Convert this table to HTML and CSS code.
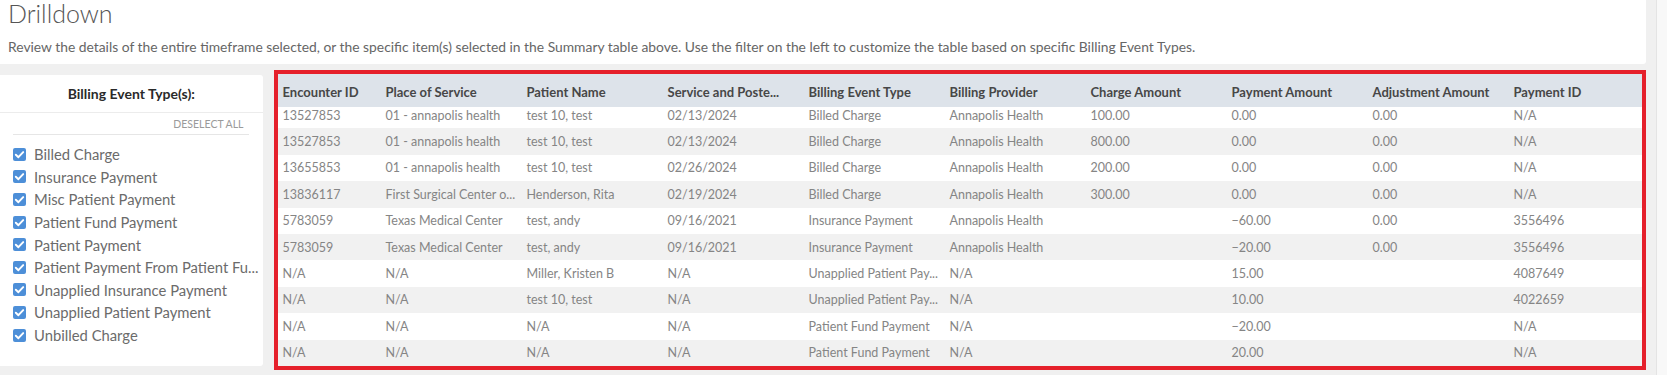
FILE: index.html
```html
<!DOCTYPE html>
<html lang="en">
<head>
<meta charset="utf-8">
<title>Drilldown</title>
<link rel="stylesheet" href="styles.css">
</head>
<body>
<div class="page">
  <main class="content">
    <section class="intro">
      <h1 class="intro-title">Drilldown</h1>
      <p class="intro-text">Review the details of the entire timeframe selected, or the specific item(s) selected in the Summary table above. Use the filter on the left to customize the table based on specific Billing Event Types.</p>
    </section>
    <div class="drill">
      <aside class="filter">
        <div class="filter-head">Billing Event Type(s):</div>
        <div class="filter-body">
          <div class="deselect">DESELECT ALL</div>
          <ul class="types">
            <li class="type"><span class="cb"><svg viewBox="0 0 12 12"><path d="M2.6 6.2 5 8.5 9.4 3.8"/></svg></span><span class="type-label">Billed Charge</span></li>
            <li class="type"><span class="cb"><svg viewBox="0 0 12 12"><path d="M2.6 6.2 5 8.5 9.4 3.8"/></svg></span><span class="type-label">Insurance Payment</span></li>
            <li class="type"><span class="cb"><svg viewBox="0 0 12 12"><path d="M2.6 6.2 5 8.5 9.4 3.8"/></svg></span><span class="type-label">Misc Patient Payment</span></li>
            <li class="type"><span class="cb"><svg viewBox="0 0 12 12"><path d="M2.6 6.2 5 8.5 9.4 3.8"/></svg></span><span class="type-label">Patient Fund Payment</span></li>
            <li class="type"><span class="cb"><svg viewBox="0 0 12 12"><path d="M2.6 6.2 5 8.5 9.4 3.8"/></svg></span><span class="type-label">Patient Payment</span></li>
            <li class="type"><span class="cb"><svg viewBox="0 0 12 12"><path d="M2.6 6.2 5 8.5 9.4 3.8"/></svg></span><span class="type-label">Patient Payment From Patient Fu...</span></li>
            <li class="type"><span class="cb"><svg viewBox="0 0 12 12"><path d="M2.6 6.2 5 8.5 9.4 3.8"/></svg></span><span class="type-label">Unapplied Insurance Payment</span></li>
            <li class="type"><span class="cb"><svg viewBox="0 0 12 12"><path d="M2.6 6.2 5 8.5 9.4 3.8"/></svg></span><span class="type-label">Unapplied Patient Payment</span></li>
            <li class="type"><span class="cb"><svg viewBox="0 0 12 12"><path d="M2.6 6.2 5 8.5 9.4 3.8"/></svg></span><span class="type-label">Unbilled Charge</span></li>
          </ul>
        </div>
      </aside>
      <div class="grid">
        <div class="grid-row grid-head">
          <div class="cell">Encounter ID</div>
          <div class="cell">Place of Service</div>
          <div class="cell">Patient Name</div>
          <div class="cell">Service and Poste...</div>
          <div class="cell">Billing Event Type</div>
          <div class="cell">Billing Provider</div>
          <div class="cell">Charge Amount</div>
          <div class="cell">Payment Amount</div>
          <div class="cell">Adjustment Amount</div>
          <div class="cell">Payment ID</div>
        </div>
        <div class="grid-body">
          <div class="grid-rows">
            <div class="grid-row"><div class="cell">13527853</div><div class="cell">01 - annapolis health</div><div class="cell">test 10, test</div><div class="cell">02/13/2024</div><div class="cell">Billed Charge</div><div class="cell">Annapolis Health</div><div class="cell">100.00</div><div class="cell">0.00</div><div class="cell">0.00</div><div class="cell">N/A</div></div>
            <div class="grid-row"><div class="cell">13527853</div><div class="cell">01 - annapolis health</div><div class="cell">test 10, test</div><div class="cell">02/13/2024</div><div class="cell">Billed Charge</div><div class="cell">Annapolis Health</div><div class="cell">800.00</div><div class="cell">0.00</div><div class="cell">0.00</div><div class="cell">N/A</div></div>
            <div class="grid-row"><div class="cell">13655853</div><div class="cell">01 - annapolis health</div><div class="cell">test 10, test</div><div class="cell">02/26/2024</div><div class="cell">Billed Charge</div><div class="cell">Annapolis Health</div><div class="cell">200.00</div><div class="cell">0.00</div><div class="cell">0.00</div><div class="cell">N/A</div></div>
            <div class="grid-row"><div class="cell">13836117</div><div class="cell">First Surgical Center o...</div><div class="cell">Henderson, Rita</div><div class="cell">02/19/2024</div><div class="cell">Billed Charge</div><div class="cell">Annapolis Health</div><div class="cell">300.00</div><div class="cell">0.00</div><div class="cell">0.00</div><div class="cell">N/A</div></div>
            <div class="grid-row"><div class="cell">5783059</div><div class="cell">Texas Medical Center</div><div class="cell">test, andy</div><div class="cell">09/16/2021</div><div class="cell">Insurance Payment</div><div class="cell">Annapolis Health</div><div class="cell"></div><div class="cell">&minus;60.00</div><div class="cell">0.00</div><div class="cell">3556496</div></div>
            <div class="grid-row"><div class="cell">5783059</div><div class="cell">Texas Medical Center</div><div class="cell">test, andy</div><div class="cell">09/16/2021</div><div class="cell">Insurance Payment</div><div class="cell">Annapolis Health</div><div class="cell"></div><div class="cell">&minus;20.00</div><div class="cell">0.00</div><div class="cell">3556496</div></div>
            <div class="grid-row"><div class="cell">N/A</div><div class="cell">N/A</div><div class="cell">Miller, Kristen B</div><div class="cell">N/A</div><div class="cell">Unapplied Patient Pay...</div><div class="cell">N/A</div><div class="cell"></div><div class="cell">15.00</div><div class="cell"></div><div class="cell">4087649</div></div>
            <div class="grid-row"><div class="cell">N/A</div><div class="cell">N/A</div><div class="cell">test 10, test</div><div class="cell">N/A</div><div class="cell">Unapplied Patient Pay...</div><div class="cell">N/A</div><div class="cell"></div><div class="cell">10.00</div><div class="cell"></div><div class="cell">4022659</div></div>
            <div class="grid-row"><div class="cell">N/A</div><div class="cell">N/A</div><div class="cell">N/A</div><div class="cell">N/A</div><div class="cell">Patient Fund Payment</div><div class="cell">N/A</div><div class="cell"></div><div class="cell">&minus;20.00</div><div class="cell"></div><div class="cell">N/A</div></div>
            <div class="grid-row"><div class="cell">N/A</div><div class="cell">N/A</div><div class="cell">N/A</div><div class="cell">N/A</div><div class="cell">Patient Fund Payment</div><div class="cell">N/A</div><div class="cell"></div><div class="cell">20.00</div><div class="cell"></div><div class="cell">N/A</div></div>
          </div>
        </div>
      </div>
    </div>
  </main>
  <div class="scrolltrack"></div>
</div>
</body>
</html>
```

FILE: styles.css
```css
* { box-sizing: border-box; }
html, body { margin: 0; padding: 0; }
body {
  background: #f0f0f0;
  font-family: Lato, "Open Sans", "Liberation Sans", sans-serif;
  color: #666;
  width: 1667px;
  height: 375px;
  overflow: hidden;
}
.page { display: flex; height: 375px; }
.content { width: 1656px; padding-right: 10px; }
.scrolltrack {
  width: 11px;
  background: #f8f8f8;
  border-left: 1px solid #e4e4e4;
}
.intro {
  background: #fff;
  height: 64px;
  border-radius: 0 0 3px 0;
  padding: 0 8px;
}
.intro-title {
  margin: 0;
  font-weight: 300;
  font-size: 25px;
  line-height: 27px;
  color: #555;
}
.intro-text {
  margin: 11px 0 0;
  font-size: 13.85px;
  line-height: 18px;
  color: #666;
}
.drill {
  display: flex;
  gap: 11px;
  margin-top: 6px;
}
.filter {
  width: 263px;
  height: 291px;
  margin-top: 5px;
  background: #fff;
  border-radius: 0 3px 3px 0;
}
.filter-head {
  height: 38px;
  line-height: 38px;
  text-align: center;
  font-size: 14px;
  font-weight: 700;
  color: #2a2a2a;
  border-bottom: 1px solid #ececec;
}
.filter-body { padding: 0 14px 0 13px; }
.deselect {
  height: 22px;
  line-height: 22px;
  text-align: right;
  padding-right: 5px;
  font-size: 10.5px;
  color: #9a9a9a;
  border-bottom: 1px solid #e6e6e6;
}
.types {
  list-style: none;
  margin: 8px -12px 0 0;
  padding: 0;
}
.type {
  display: flex;
  align-items: center;
  height: 22.6px;
}
.cb {
  width: 13px;
  height: 13px;
  flex: none;
  border-radius: 2px;
  background: #4d8fd8;
  display: flex;
}
.cb svg {
  width: 13px;
  height: 13px;
  fill: none;
  stroke: #fff;
  stroke-width: 1.8;
  stroke-linecap: round;
  stroke-linejoin: round;
}
.type-label {
  margin-left: 8px;
  white-space: nowrap;
  font-size: 14.8px;
  color: #6b6b6b;
}
.grid {
  width: 1375px;
  height: 300px;
  border: 4px solid #e5202b;
  background: #fff;
  display: flex;
  flex-direction: column;
}
.grid-row {
  display: grid;
  grid-template-columns: 103px repeat(8, 141px) 1fr;
  height: 26.4px;
  align-items: center;
}
.grid-head {
  height: 33px;
  padding-top: 3px;
  background: #dde3ea;
}
.grid-head .cell {
  font-weight: 700;
  color: #474747;
  font-size: 13px;
}
.grid-body { flex: 1; overflow: hidden; }
.grid-rows { margin-top: -5px; }
.grid-rows .grid-row:nth-child(even) { background: #f1f1f1; }
.cell {
  padding-left: 5px;
  padding-right: 4px;
  white-space: nowrap;
  overflow: hidden;
  text-overflow: ellipsis;
  font-size: 12.5px;
  color: #858585;
}
```
